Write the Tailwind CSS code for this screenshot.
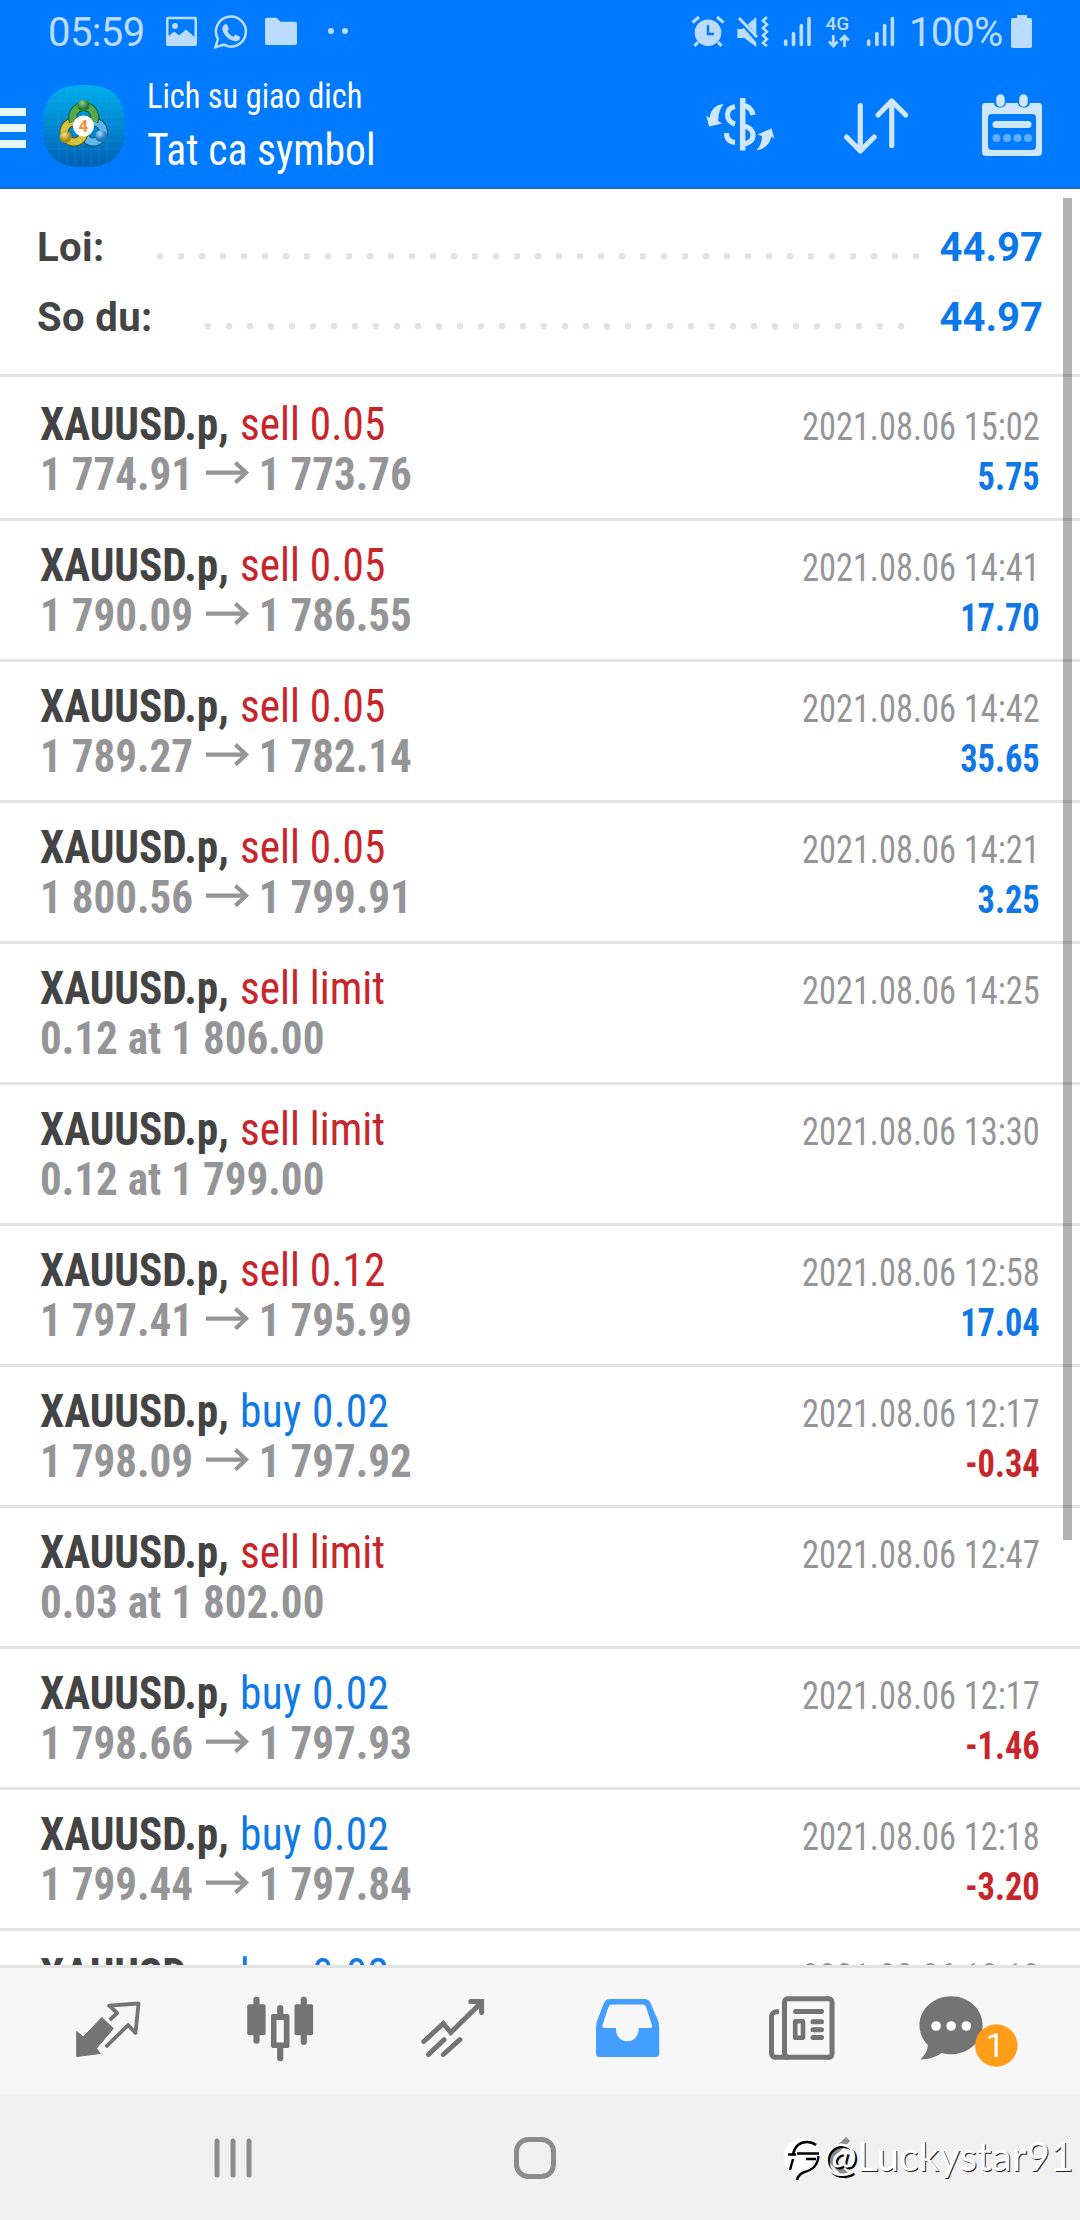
<!DOCTYPE html>
<html lang="vi">
<head>
<meta charset="utf-8">
<title>Lich su giao dich</title>
<script src="https://cdn.jsdelivr.net/npm/@tailwindcss/browser@4"></script>
</head>
<body class="w-[1080px] h-[2220px] overflow-hidden bg-white font-['Roboto',sans-serif]">
<div class="relative flex h-[2220px] w-[1080px] flex-col">

<header class="h-[189px] shrink-0 border-b-2 border-[#1a6cc4] bg-[#007aff]">
  <!-- status bar -->
  <div class="flex h-[64px] items-center justify-between pl-12 pr-12 text-[#bcdcff]">
    <div class="flex items-center">
      <span class="w-[112px] whitespace-nowrap text-[40px] leading-[67px] tracking-[-0.6px]">05:59</span>
      <svg class="h-[64px] w-[200px]" viewBox="160 0 200 64" fill="none">
        <path fill="currentColor" fill-rule="evenodd" d="M168 16.700h27a2 2 0 0 1 2 2V44a2 2 0 0 1-2 2h-27a2 2 0 0 1-2-2V18.700a2 2 0 0 1 2-2zM168.500 19.200V36l6-4.500 4.500 4 7-6 8.500 7.500V19.200z"/>
        <circle cx="175" cy="26" r="3" fill="currentColor"/>
        <path d="M215.500 47.200l2.400-8.200a15 15 0 1 1 5.800 5.700z" stroke="currentColor" stroke-width="2.500"/>
        <path fill="currentColor" d="M224.500 24.500l2.200-.4 2.300 4.800-1.600 2.300c1.500 2.800 3.200 4.200 6 5.600l2-2.300 4.800 2.400c0 3.200-2.600 4.600-5.200 4.400-6.500-1.200-11.500-6.300-12.700-12 0-2 .8-3.800 2.200-4.800z"/>
        <path fill="currentColor" d="M267 17.700h9.500l4 4H295a2 2 0 0 1 2 2V43a2 2 0 0 1-2 2h-28a2 2 0 0 1-2-2V19.700a2 2 0 0 1 2-2z"/>
        <circle cx="331" cy="31" r="3" fill="currentColor"/><circle cx="345" cy="31" r="3" fill="currentColor"/>
      </svg>
    </div>
    <div class="flex items-center">
      <svg class="h-[64px] w-[221px]" viewBox="688 0 221 64" fill="none" stroke="currentColor">
        <circle cx="708" cy="32.700" r="13.300" fill="currentColor" stroke="none"/>
        <path d="M708 25v9h6" stroke="#007aff" stroke-width="2.500"/>
        <path d="M692.500 22.500l6.500-5.500M723.500 22.500l-6.500-5.500M698 42l-3.500 4M718 42l3.500 4" stroke-width="3"/>
        <path d="M737.300 29h5l14-12v30l-12-9h-7z" fill="currentColor" stroke="none"/>
        <path d="M737 16l24 28" stroke="#007aff" stroke-width="5"/>
        <path d="M739 18l18 19" stroke-width="3"/>
        <path d="M767 17l-4 3.700 4 3.700-4 3.700 4 3.700-4 3.700 4 3.700-4 3.700 4 3.300" stroke-width="2.600"/>
        <g stroke-width="3.600" stroke-linecap="round">
          <path d="M785.700 41v3.500M793.500 33.500v11M801.300 25.500v19M809 18.500v26M868.700 41v3.500M876.900 33.500v11M884.600 25.500v19M892.400 18.500v26"/>
        </g>
        <path d="M833.300 35v11M829 41.500l4.300 4.500 4.300-4.500M844.500 47V36M840.200 40.500l4.300-4.500 4.300 4.500" stroke-width="2.800"/>
        <text x="825.500" y="29.700" font-size="19" font-weight="500" fill="currentColor" stroke="none">4G</text>
      </svg>
      <span class="w-[102px] whitespace-nowrap text-[40px] leading-[67px] tracking-[-0.8px]">100%</span>
      <svg class="h-[64px] w-[21px]" viewBox="1011 0 21 64" fill="currentColor">
        <path d="M1017 15h10v3h3a2 2 0 0 1 2 2v26a2 2 0 0 1-2 2h-17a2 2 0 0 1-2-2V20a2 2 0 0 1 2-2h4z"/>
      </svg>
    </div>
  </div>
  <!-- app bar -->
  <div class="flex h-[123px] items-center">
    <div class="flex w-[26px] flex-col gap-2 pt-1">
      <i class="h-2 bg-[#e8f6ff]"></i><i class="h-2 bg-[#e8f6ff]"></i><i class="h-2 bg-[#e8f6ff]"></i>
    </div>
    <svg class="ml-[17px] h-[82px] w-[82px]" viewBox="0 0 82 82">
      <defs>
        <linearGradient id="bg" x1="0" y1="0" x2="0" y2="1"><stop offset="0" stop-color="#00aeee"/><stop offset="1" stop-color="#0060b4"/></linearGradient>
        <radialGradient id="gr" cx=".4" cy=".3"><stop offset="0" stop-color="#8fd08a"/><stop offset="1" stop-color="#1f7a35"/></radialGradient>
        <radialGradient id="ye" cx=".4" cy=".3"><stop offset="0" stop-color="#f4e488"/><stop offset="1" stop-color="#a98a10"/></radialGradient>
        <radialGradient id="bl" cx=".4" cy=".3"><stop offset="0" stop-color="#a9dcfa"/><stop offset="1" stop-color="#1f78be"/></radialGradient>
      </defs>
      <path fill="url(#bg)" d="M41 0C70 0 82 12 82 41S70 82 41 82 0 70 0 41 12 0 41 0z"/>
      <path d="M16 6v70M24 3v76M32 1v80M40 0v82M48 1v80M56 2v78M64 5v72M6 16h70M3 24h76M1 32h80M0 40h82M1 48h80M2 56h78M5 64h72" stroke="#3fb2ee" stroke-opacity=".22" stroke-width=".8"/>
      <g fill="none">
        <circle cx="50.500" cy="47" r="10" stroke="#134f7c" stroke-width="9"/>
        <circle cx="50.500" cy="47" r="10" stroke="#62b4ea" stroke-width="7"/>
        <circle cx="31" cy="47" r="10" stroke="#5e560f" stroke-width="9"/>
        <circle cx="31" cy="47" r="10" stroke="#d3c240" stroke-width="7"/>
        <path d="M30.500 36.500a11 11 0 1 1 20.500 0" stroke="#1b5b26" stroke-width="9"/>
        <path d="M30.500 36.500a11 11 0 1 1 20.500 0" stroke="#5aa84c" stroke-width="7"/>
      </g>
      <circle cx="40.500" cy="20.500" r="6" fill="url(#gr)"/><circle cx="22.500" cy="52" r="6" fill="url(#ye)"/><circle cx="58" cy="51" r="6" fill="url(#bl)"/>
      <circle cx="40.500" cy="41" r="10.500" fill="#fff"/>
      <text x="40.500" y="47" text-anchor="middle" font-size="17" font-weight="700" fill="#f0913a">4</text>
    </svg>
    <div class="ml-[22px] flex w-[400px] flex-col text-white [font-stretch:75%]">
      <span class="origin-left scale-x-[0.925] whitespace-nowrap text-[35px] leading-[48px]">Lich su giao dich</span>
      <span class="origin-left scale-x-[0.925] whitespace-nowrap text-[45px] leading-[58px]">Tat ca symbol</span>
    </div>
    <svg class="ml-[113px] h-[123px] w-[420px]" viewBox="660 64 420 123" fill="none" stroke="#cfe6ff">
      <!-- currency exchange -->
      <path d="M742.700 98v52.500" stroke-width="5.500"/>
      <path d="M753 115c-1-6-5-9-10-9.500M743 126c7 1 10 5 10 9.500s-4 8-10 8.500" stroke-width="5.200"/>
      <path d="M735 106.500c-5 1-7.500 4-7.500 8.500s2.500 7.500 7.500 9M726.500 133c0 6 3 9 8.500 9.500" stroke-width="5"/>
      <path d="M723.500 104q-12 1-14 14l-3.300-2.500 3 11 13-3-4-2.500q0-10 5.300-17zM756.500 150.500q12-2 15-14l3 2.500-3-10.500-14 6 4.500 1.500q0 8-5.500 14.500z" fill="#cfe6ff" stroke="none"/>
      <!-- sort -->
      <path d="M860.300 105.500v44M846.500 137l13.800 14 14-14M891.700 145.500v-44M878 115l13.700-14 14 14" stroke-width="5.200" stroke-linecap="round" stroke-linejoin="round"/>
      <!-- calendar -->
      <path fill="#cfe6ff" stroke="none" fill-rule="evenodd" d="M985 103h9c0 6 12 6 12 0h12c0 6 12 6 12 0h9a3 3 0 0 1 3 3v46a4 4 0 0 1-4 4h-52a4 4 0 0 1-4-4v-46a3 3 0 0 1 3-3zM992 114a4 4 0 0 0-4 4v28a4 4 0 0 0 4 4h40a4 4 0 0 0 4-4v-28a4 4 0 0 0-4-4z"/>
      <path d="M1000.500 98.500v4M1023.500 98.500v4" stroke-width="8.500" stroke-linecap="round"/>
      <path d="M996 124.500h32" stroke-width="7" stroke-linecap="round"/>
      <g fill="#5faeff" stroke="none"><circle cx="996.500" cy="138" r="4"/><circle cx="1007" cy="138" r="4"/><circle cx="1017.500" cy="138" r="4"/><circle cx="1028" cy="138" r="4"/></g>
    </svg>
  </div>
</header>

<main class="relative flex h-[1776px] shrink-0 flex-col overflow-hidden">
  <section class="flex h-[188px] shrink-0 flex-col border-b-[3px] border-[#e3e3e3] pl-[37px] pr-[37px] pt-[24px] text-[40px] font-bold leading-[70px]">
    <div class="flex h-[70px] justify-between">
      <span class="tracking-[0.4px] text-[#444]">Loi:</span>
      <span class="flex gap-[20px]"><svg class="h-[70px] w-[764px]" viewBox="0 0 764 70"><path d="M4 43.200h757" stroke="#e2e2e2" stroke-width="6.600" stroke-linecap="round" stroke-dasharray="0 21"/></svg><span class="text-[#0a78ea]">44.97</span></span>
    </div>
    <div class="flex h-[70px] justify-between">
      <span class="tracking-[0.4px] text-[#444]">So du:</span>
      <span class="flex gap-[35px]"><svg class="h-[70px] w-[701px]" viewBox="0 0 701 70"><path d="M4 43.200h694" stroke="#e2e2e2" stroke-width="6.600" stroke-linecap="round" stroke-dasharray="0 21"/></svg><span class="text-[#0a78ea]">44.97</span></span>
    </div>
  </section>
  <div id="deals" class="flex flex-col pt-[3px]"></div>
  <div class="absolute left-[1063px] top-[9px] h-[1342px] w-[9px] bg-black/30"></div>
</main>

<nav class="grid h-[129px] shrink-0 grid-cols-6 justify-items-center border-t-[3px] border-[#e3e3e3] bg-[#f7f7f7] pl-5 pr-[18px] text-[#747474]">
  <svg class="h-[126px] w-[120px]" viewBox="46.800 1968 120 126" fill="none" stroke="currentColor" stroke-width="3.800" stroke-linejoin="round">
    <path fill="currentColor" stroke-width="1" d="M76.500 2031.500l6.500 5.500 18.600-19.500 11.600 11-17 20 4 5-23.700 3z"/>
    <path d="M109.500 2020l7.500-7-8-7.300 29.300-2.200-3 29.500-7.300-8-22.500 22"/>
  </svg>
  <svg class="h-[126px] w-[120px]" viewBox="220 1968 120 126" fill="currentColor">
    <rect x="247.200" y="2004.300" width="18.400" height="31" rx="2"/><rect x="253.400" y="1996.700" width="6.200" height="47" rx="3"/>
    <rect x="294.500" y="2004.300" width="18.600" height="31" rx="2"/><rect x="300.700" y="1996.700" width="6.200" height="48.300" rx="3"/>
    <path fill-rule="evenodd" d="M273 2014h14.500a2 2 0 0 1 2 2v30a2 2 0 0 1-2 2H273a2 2 0 0 1-2-2v-30a2 2 0 0 1 2-2zm3.500 6v22.500h7.300V2020z"/>
    <rect x="277.100" y="2005" width="6.200" height="12" rx="3"/><rect x="277.100" y="2044" width="6.200" height="17.300" rx="3"/>
  </svg>
  <svg class="h-[126px] w-[120px]" viewBox="394.200 1968 120 126" fill="none" stroke="currentColor" stroke-width="5" stroke-linecap="round">
    <path d="M424 2041.500l19.500-18 7.500 9 30.500-30M471 2001.500h10.800v11M428.700 2054.500l15.500-14.800M443.500 2054.500l16.500-14.800"/>
  </svg>
  <svg class="h-[126px] w-[120px]" viewBox="567.800 1968 120 126" fill="#439eff">
    <path fill-rule="evenodd" d="M610 1999h34.500q4 0 5.500 3.500l7.500 17q1.500 3.500 1.500 8v26a3.500 3.500 0 0 1-3.500 3.500h-56.200a3.500 3.500 0 0 1-3.500-3.500v-26q0-4.500 1.500-8l6.700-17q1.500-3.500 6-3.500zm1.500 5.500q-2.300 0-3.200 2.500l-6 18q-.8 3 1.500 3h12v2a11.300 11.300 0 0 0 22.600 0v-2h11.900q2.300 0 1.500-3l-6-18q-.9-2.500-3.200-2.500z"/>
  </svg>
  <svg class="h-[126px] w-[120px]" viewBox="741 1968 120 126" fill="none" stroke="currentColor" stroke-width="5">
    <rect x="784.500" y="1998.800" width="47.500" height="58.500" rx="3"/>
    <path d="M779 2011.800h-2.500a5 5 0 0 0-5 5v36.500a4 4 0 0 0 4 4H788q-3.500-1-3.500-5"/>
    <path d="M795.500 2011.500h26M813 2021.700h8.500M813 2029.700h8.500M813 2037.500h8.500" stroke-linecap="round"/>
    <rect x="795.200" y="2021.200" width="7.800" height="16.600" rx=".5" stroke-width="4.600"/>
  </svg>
  <svg class="h-[126px] w-[120px]" viewBox="914.700 1968 120 126">
    <path fill="currentColor" d="M950.800 1996.300c17.500 0 31.600 13 31.600 29s-14.100 29-31.600 29c-3.500 0-6.500-.4-9.500-1.300-6 4.300-13.500 6.500-21.300 6.300 4.500-4 7.500-8.500 7.500-14.300-5-5-8.300-12-8.300-19.700 0-16 14.100-29 31.600-29z"/>
    <g fill="#fff"><circle cx="935.800" cy="2026" r="4.800"/><circle cx="950.800" cy="2026" r="4.800"/><circle cx="966" cy="2026" r="4.800"/></g>
    <circle cx="996" cy="2045.500" r="21.200" fill="#ff9d18"/>
    <text x="995" y="2057" text-anchor="middle" font-size="33" fill="#fff">1</text>
  </svg>
</nav>

<footer class="relative h-[126px] shrink-0 bg-[#f1f1f1]">
  <svg class="h-[126px] w-[1080px]" viewBox="0 2094 1080 126" fill="none" stroke="#8c8c8c">
    <path d="M217 2141v34M233 2141v34M249 2141v34" stroke-width="5" stroke-linecap="round"/>
    <rect x="516.500" y="2139.500" width="37" height="37" rx="12" stroke-width="5"/>
    <path d="M848 2139l-19 19 19 19" stroke-width="6"/>
  </svg>
  <div class="absolute left-[782px] top-[38px] flex items-center">
    <svg class="h-[48px] w-[41px]" viewBox="782 2134 41 48" fill="none">
      <circle cx="801.500" cy="2159" r="18" fill="#fff"/>
      <path d="M793 2156q3-12 14-12 5 0 9 3M788 2156.500h8M797 2155.500h22M806 2161h10M793 2161l-3 11M818.500 2158q-1 13-14 16-6 2-7.500 8" stroke="#000" stroke-width="2.400"/>
    </svg>
    <span class="whitespace-nowrap font-['Lato'] text-[40.5px] leading-[48px] text-white [text-shadow:1px_1px_0_#222]"><span class="[text-shadow:2px_2px_0_#000]">@</span>Luckystar91</span>
  </div>
</footer>
</div>

<script>
const rows = [
  ['sell 0.05','1 774.91','1 773.76','15:02','5.75'],
  ['sell 0.05','1 790.09','1 786.55','14:41','17.70'],
  ['sell 0.05','1 789.27','1 782.14','14:42','35.65'],
  ['sell 0.05','1 800.56','1 799.91','14:21','3.25'],
  ['sell limit','0.12 at 1 806.00','','14:25',''],
  ['sell limit','0.12 at 1 799.00','','13:30',''],
  ['sell 0.12','1 797.41','1 795.99','12:58','17.04'],
  ['buy 0.02','1 798.09','1 797.92','12:17','-0.34'],
  ['sell limit','0.03 at 1 802.00','','12:47',''],
  ['buy 0.02','1 798.66','1 797.93','12:17','-1.46'],
  ['buy 0.02','1 799.44','1 797.84','12:18','-3.20'],
  ['buy 0.02','','','12:18','']
];
const arrow = '<svg class="ml-[14px] mr-[10px] h-[50px] w-[46px]" viewBox="0 0 46 50" fill="none" stroke="#959597" stroke-width="4.2"><path d="M0 23.700h43M31.500 13.700l11.500 10-11.500 10"/></svg>';
document.getElementById('deals').innerHTML = rows.map(([op, a, b, t, v]) => `
  <div class="flex h-[141px] shrink-0 justify-between border-b-[3px] border-[#e3e3e3] pl-10 pr-10 pt-[19px] leading-[50px] [font-stretch:75%] whitespace-nowrap">
    <div class="text-[46px]">
      <div class="flex origin-left scale-x-[0.94] gap-[12px]"><b class="font-bold text-[#444]">XAUUSD.p,</b><span class="${op[0] === 's' ? 'text-[#c8252b]' : 'tracking-[0.5px] text-[#0f7ae5]'}">${op}</span></div>
      <div class="flex origin-left scale-x-[0.937] font-bold text-[#959597]"><span>${a}</span>${b ? arrow + `<span>${b}</span>` : ''}</div>
    </div>
    <div class="origin-right scale-x-[0.905] pt-[3px] text-right text-[38px]">
      <div class="text-[#959597]">2021.08.06 ${t}</div>
      <div class="font-bold ${v[0] === '-' ? 'text-[#c8252b]' : 'text-[#0f78e6]'}">${v}</div>
    </div>
  </div>`).join('');
</script>
</body>
</html>
